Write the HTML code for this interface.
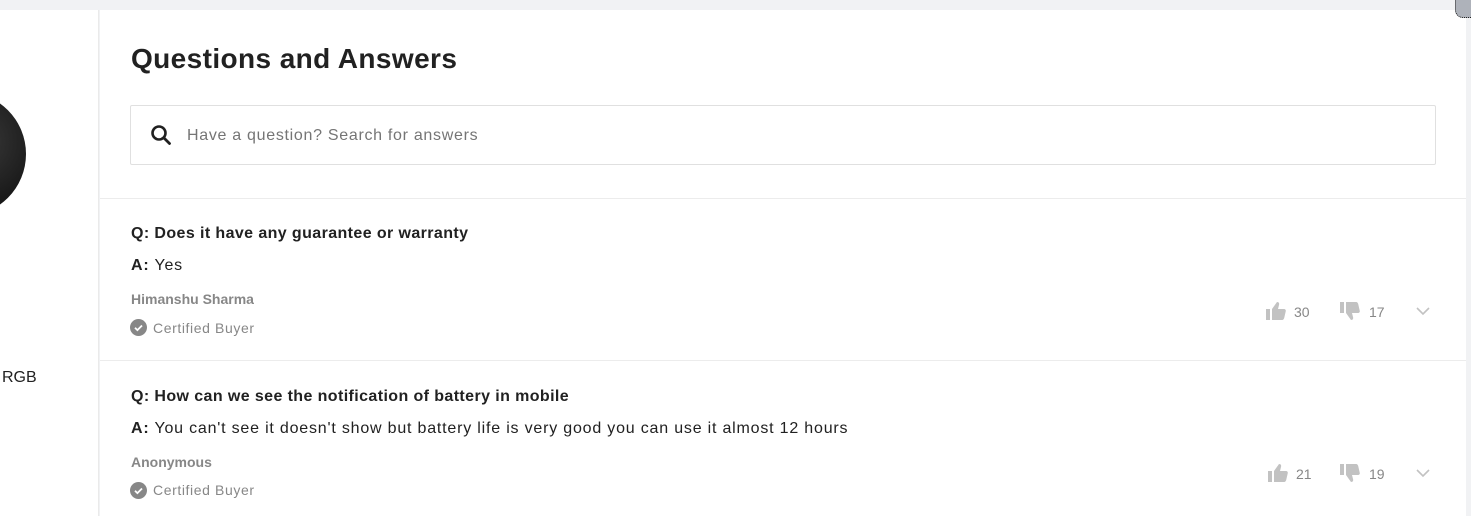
<!DOCTYPE html>
<html><head><style>
*{margin:0;padding:0;box-sizing:border-box}
body{width:1471px;height:516px;overflow:hidden;background:#f1f2f4;font-family:"Liberation Sans",sans-serif;color:#212121;position:relative}
.left{position:absolute;left:0;top:10px;width:99px;height:506px;background:#fff;border-right:1px solid #eaeaea;overflow:hidden}
.main{position:absolute;left:100px;top:10px;width:1366px;height:506px;background:#fff}
.abs{position:absolute;white-space:nowrap}
h1{position:absolute;left:31px;top:33px;font-size:28px;font-weight:bold;color:#212121;letter-spacing:0.4px}
.search{position:absolute;left:30px;top:95px;width:1306px;height:60px;border:1px solid #e0e0e0;border-radius:2px}
.search span{position:absolute;left:56px;top:21px;font-size:16px;color:#757575;letter-spacing:0.7px}
.hr{position:absolute;left:0;width:1366px;height:1px;background:#ececec}
.q{font-size:16px;font-weight:bold;color:#212121;letter-spacing:0.4px}
.a{font-size:16px;color:#212121;letter-spacing:0.8px}
.n{font-size:14px;font-weight:bold;color:#878787}
.c{font-size:14px;color:#878787;letter-spacing:0.6px}
.cnt{font-size:14px;color:#878787}
</style></head><body>
<div class="left">
  <div class="abs" style="left:-98px;top:82px;width:124px;height:124px;border-radius:50%;background:radial-gradient(circle at 60% 40%,#3a3a3a,#111 75%)"></div>
  <div class="abs" style="left:2px;top:359px;font-size:16px;color:#212121">RGB</div>
</div>
<div class="main">
  <h1>Questions and Answers</h1>
  <div class="search">
    <svg class="abs" style="left:19px;top:18px" width="22" height="22" viewBox="0 0 22 22"><circle cx="9" cy="9" r="6.5" fill="none" stroke="#212121" stroke-width="2.6"/><path d="M14 14l5.5 5.5" stroke="#212121" stroke-width="2.8" stroke-linecap="round"/></svg>
    <span>Have a question? Search for answers</span>
  </div>
  <div class="hr" style="top:188px"></div>
  <div class="abs q" style="left:31px;top:215px">Q: Does it have any guarantee or warranty</div>
  <div class="abs a" style="left:31px;top:247px"><b>A:</b> Yes</div>
  <div class="abs n" style="left:31px;top:281px">Himanshu Sharma</div>
  <svg class="abs" style="left:30px;top:309px" width="17" height="17" viewBox="0 0 17 17"><circle cx="8.5" cy="8.5" r="8.5" fill="#878787"/><path d="M5 8.7l2.4 2.4 4.6-4.6" fill="none" stroke="#fff" stroke-width="1.8"/></svg>
  <div class="abs c" style="left:53px;top:310px">Certified Buyer</div>
  <svg class="abs" style="left:1166px;top:292px" width="20" height="18" viewBox="0 0 20 18"><rect x="0" y="7" width="4" height="11" fill="#c2c2c2"/><path d="M6 7l5-7c2 0 2.5 1.5 2 3l-1 4h6c1.2 0 2 1 1.8 2l-1.6 7c-.3 1-1 2-2 2H6z" fill="#c2c2c2"/></svg>
  <div class="abs cnt" style="left:1194px;top:294px">30</div>
  <svg class="abs" style="left:1240px;top:292px" width="20" height="18" viewBox="0 0 20 18"><rect x="0" y="0" width="4" height="11" fill="#c2c2c2"/><path d="M6 11l5 7c2 0 2.5-1.5 2-3l-1-4h6c1.2 0 2-1 1.8-2l-1.6-7c-.3-1-1-2-2-2H6z" fill="#c2c2c2"/></svg>
  <div class="abs cnt" style="left:1269px;top:294px">17</div>
  <svg class="abs" style="left:1316px;top:297px" width="14" height="9" viewBox="0 0 14 9"><path d="M1 1l6 6 6-6" fill="none" stroke="#c2c2c2" stroke-width="1.6"/></svg>
  <div class="hr" style="top:350px"></div>
  <div class="abs q" style="left:31px;top:378px">Q: How can we see the notification of battery in mobile</div>
  <div class="abs a" style="left:31px;top:410px"><b>A:</b> You can't see it doesn't show but battery life is very good you can use it almost 12 hours</div>
  <div class="abs n" style="left:31px;top:444px">Anonymous</div>
  <svg class="abs" style="left:30px;top:472px" width="17" height="17" viewBox="0 0 17 17"><circle cx="8.5" cy="8.5" r="8.5" fill="#878787"/><path d="M5 8.7l2.4 2.4 4.6-4.6" fill="none" stroke="#fff" stroke-width="1.8"/></svg>
  <div class="abs c" style="left:53px;top:472px">Certified Buyer</div>
  <svg class="abs" style="left:1168px;top:454px" width="20" height="18" viewBox="0 0 20 18"><rect x="0" y="7" width="4" height="11" fill="#c2c2c2"/><path d="M6 7l5-7c2 0 2.5 1.5 2 3l-1 4h6c1.2 0 2 1 1.8 2l-1.6 7c-.3 1-1 2-2 2H6z" fill="#c2c2c2"/></svg>
  <div class="abs cnt" style="left:1196px;top:456px">21</div>
  <svg class="abs" style="left:1240px;top:454px" width="20" height="18" viewBox="0 0 20 18"><rect x="0" y="0" width="4" height="11" fill="#c2c2c2"/><path d="M6 11l5 7c2 0 2.5-1.5 2-3l-1-4h6c1.2 0 2-1 1.8-2l-1.6-7c-.3-1-1-2-2-2H6z" fill="#c2c2c2"/></svg>
  <div class="abs cnt" style="left:1269px;top:456px">19</div>
  <svg class="abs" style="left:1316px;top:459px" width="14" height="9" viewBox="0 0 14 9"><path d="M1 1l6 6 6-6" fill="none" stroke="#c2c2c2" stroke-width="1.6"/></svg>
</div>
<div class="abs" style="left:1455px;top:-4px;width:22px;height:22px;border-radius:0 0 0 8px;background:#aeb2ba;border:1px dotted #222"></div>
</body></html>
